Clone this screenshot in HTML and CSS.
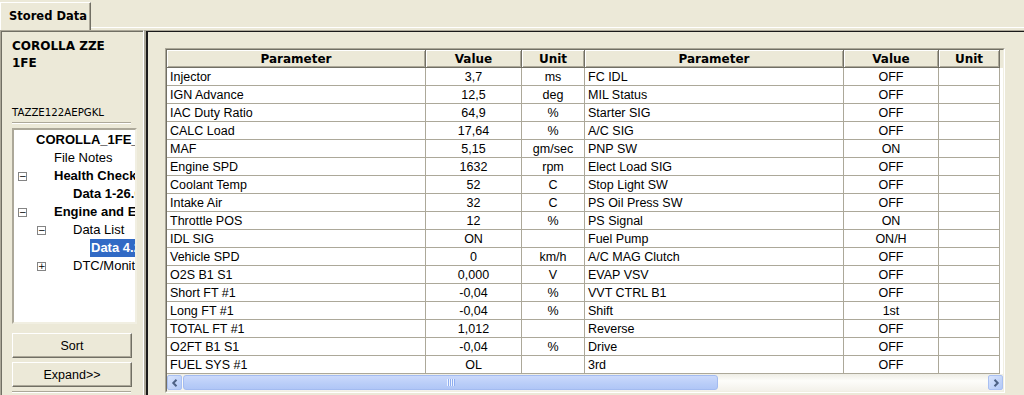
FILE: index.html
```html
<!DOCTYPE html>
<html>
<head>
<meta charset="utf-8">
<link rel="stylesheet" href="styles.css">
</head>
<body>
<div class="app">
  <div class="tabbar">
    <div class="tab">Stored Data</div>
    <div class="tabfill"></div>
  </div>
  <div class="main">
    <aside class="left">
      <div class="model">COROLLA ZZE<br>1FE</div>
      <div class="vin">TAZZE122AEPGKL</div>
      <div class="sep"></div>
      <div class="tree">
        <div class="node l0 bold"><span class="label">COROLLA_1FE_ZZE</span></div>
        <div class="node l1"><span class="slot"></span><span class="label">File Notes</span></div>
        <div class="node l1 bold"><span class="slot"><span class="exp">&#8722;</span></span><span class="label">Health Check</span></div>
        <div class="node l2 bold"><span class="slot"></span><span class="label">Data 1-26.05</span></div>
        <div class="node l1 bold"><span class="slot"><span class="exp">&#8722;</span></span><span class="label">Engine and ECT</span></div>
        <div class="node l2"><span class="slot"><span class="exp">&#8722;</span></span><span class="label">Data List</span></div>
        <div class="node l3 bold"><span class="slot"></span><span class="label sel">Data 4.26</span></div>
        <div class="node l2"><span class="slot"><span class="exp">+</span></span><span class="label">DTC/Monitor</span></div>
      </div>
      <button class="btn first">Sort</button>
      <button class="btn">Expand&gt;&gt;</button>
      <div class="sep bottom"></div>
    </aside>
    <section class="right">
      <div class="gridbox">
        <div class="gridinner">
          <div class="row hdr">
            <div>Parameter</div><div>Value</div><div>Unit</div>
            <div>Parameter</div><div>Value</div><div>Unit</div>
          </div>
          <div class="row"><div>Injector</div><div class="c">3,7</div><div class="c">ms</div><div>FC IDL</div><div class="c">OFF</div><div class="c"></div></div>
          <div class="row"><div>IGN Advance</div><div class="c">12,5</div><div class="c">deg</div><div>MIL Status</div><div class="c">OFF</div><div class="c"></div></div>
          <div class="row"><div>IAC Duty Ratio</div><div class="c">64,9</div><div class="c">%</div><div>Starter SIG</div><div class="c">OFF</div><div class="c"></div></div>
          <div class="row"><div>CALC Load</div><div class="c">17,64</div><div class="c">%</div><div>A/C SIG</div><div class="c">OFF</div><div class="c"></div></div>
          <div class="row"><div>MAF</div><div class="c">5,15</div><div class="c">gm/sec</div><div>PNP SW</div><div class="c">ON</div><div class="c"></div></div>
          <div class="row"><div>Engine SPD</div><div class="c">1632</div><div class="c">rpm</div><div>Elect Load SIG</div><div class="c">OFF</div><div class="c"></div></div>
          <div class="row"><div>Coolant Temp</div><div class="c">52</div><div class="c">C</div><div>Stop Light SW</div><div class="c">OFF</div><div class="c"></div></div>
          <div class="row"><div>Intake Air</div><div class="c">32</div><div class="c">C</div><div>PS Oil Press SW</div><div class="c">OFF</div><div class="c"></div></div>
          <div class="row"><div>Throttle POS</div><div class="c">12</div><div class="c">%</div><div>PS Signal</div><div class="c">ON</div><div class="c"></div></div>
          <div class="row"><div>IDL SIG</div><div class="c">ON</div><div class="c"></div><div>Fuel Pump</div><div class="c">ON/H</div><div class="c"></div></div>
          <div class="row"><div>Vehicle SPD</div><div class="c">0</div><div class="c">km/h</div><div>A/C MAG Clutch</div><div class="c">OFF</div><div class="c"></div></div>
          <div class="row"><div>O2S B1 S1</div><div class="c">0,000</div><div class="c">V</div><div>EVAP VSV</div><div class="c">OFF</div><div class="c"></div></div>
          <div class="row"><div>Short FT #1</div><div class="c">-0,04</div><div class="c">%</div><div>VVT CTRL B1</div><div class="c">OFF</div><div class="c"></div></div>
          <div class="row"><div>Long FT #1</div><div class="c">-0,04</div><div class="c">%</div><div>Shift</div><div class="c">1st</div><div class="c"></div></div>
          <div class="row"><div>TOTAL FT #1</div><div class="c">1,012</div><div class="c"></div><div>Reverse</div><div class="c">OFF</div><div class="c"></div></div>
          <div class="row"><div>O2FT B1 S1</div><div class="c">-0,04</div><div class="c">%</div><div>Drive</div><div class="c">OFF</div><div class="c"></div></div>
          <div class="row"><div>FUEL SYS #1</div><div class="c">OL</div><div class="c"></div><div>3rd</div><div class="c">OFF</div><div class="c"></div></div>
          <div class="hscroll">
            <div class="sbtn"><svg width="8" height="8" viewBox="0 0 8 8"><polyline points="5.5,0.8 2.3,4 5.5,7.2" fill="none" stroke="#4d6185" stroke-width="2"/></svg></div>
            <div class="thumb"><div class="grip"></div></div>
            <div class="track"></div>
            <div class="sbtn"><svg width="8" height="8" viewBox="0 0 8 8"><polyline points="2.5,0.8 5.7,4 2.5,7.2" fill="none" stroke="#4d6185" stroke-width="2"/></svg></div>
          </div>
        </div>
      </div>
    </section>
  </div>
</div>
</body>
</html>
```

FILE: styles.css
```css
body {
  margin: 0;
  background: #ece9d8;
}

.app {
  width: 1024px;
  height: 395px;
  overflow: hidden;
  display: flex;
  flex-direction: column;
  font-family: "Liberation Sans", Arial, sans-serif;
  color: #000;
}

/* Tab strip */
.tabbar {
  height: 30px;
  flex: none;
  display: flex;
}

.tab {
  width: 91px;
  height: 28px;
  margin-top: 2px;
  box-sizing: border-box;
  border-top: 1px solid #fff;
  border-left: 1px solid #fff;
  border-right: 1px solid #716f64;
  box-shadow: inset -1px 0 #aca899;
  padding: 6px 0 0 8px;
  white-space: nowrap;
  font: bold 11.5px/14px "DejaVu Sans", sans-serif;
}

.tabfill {
  flex: 1;
  height: 28px;
  box-sizing: border-box;
  border-bottom: 1px solid #fff;
}

/* Main area */
.main {
  flex: 1;
  display: flex;
  min-height: 0;
}

.left {
  width: 144px;
  flex: none;
  box-sizing: border-box;
  border-top: 1px solid #aca899;
  border-left: 1px solid #aca899;
  border-right: 1px solid #fff;
  box-shadow: inset 1px 1px #716f64;
  padding: 7px 0 0 11px;
  display: flex;
  flex-direction: column;
}

.model {
  font: bold 12px/17px "DejaVu Sans", sans-serif;
  height: 34px;
}

.vin {
  margin-top: 34px;
  font: 10.2px/14px "DejaVu Sans", sans-serif;
}

.sep {
  margin-top: 2px;
  width: 119px;
  height: 0;
  border-top: 1px solid #aca899;
  border-bottom: 1px solid #fff;
}

.sep.bottom {
  margin-top: 4px;
}

.tree {
  margin-top: 4px;
  width: 125px;
  height: 196px;
  box-sizing: border-box;
  background: #fff;
  border: 2px solid;
  border-color: #aca899 #f1efe2 #f1efe2 #aca899;
  padding-top: 1px;
  overflow: hidden;
  font: 13px/18px "Liberation Sans", Arial, sans-serif;
}

.node {
  height: 18px;
  display: flex;
  align-items: center;
  white-space: nowrap;
}

.node.bold {
  font-weight: bold;
}

.l0 { padding-left: 22px; }
.l1 { padding-left: 4px; }
.l2 { padding-left: 23px; }
.l3 { padding-left: 40px; }

.slot {
  width: 36px;
  flex: none;
  display: flex;
  align-items: center;
}

.exp {
  width: 9px;
  height: 9px;
  box-sizing: border-box;
  border: 1px solid #848484;
  background: #fff;
  font: normal 9px/7px "DejaVu Sans", sans-serif;
  text-align: center;
  color: #000;
  overflow: hidden;
}

.label {
  line-height: 18px;
}

.label.sel {
  background: #316ac5;
  color: #fff;
  padding: 0 2px 0 1px;
}

.btn {
  margin-top: 4px;
  width: 120px;
  height: 25px;
  padding: 0;
  background: #ece9d8;
  border: 1px solid;
  border-color: #fff #716f64 #716f64 #fff;
  box-shadow: inset -1px -1px #aca899;
  font: 12.5px "Liberation Sans", Arial, sans-serif;
  color: #000;
}

.btn.first {
  margin-top: 9px;
}

/* Right panel */
.right {
  flex: 1;
  box-sizing: border-box;
  border-top: 1px solid #aca899;
  border-left: 2px solid #aca899;
  box-shadow: inset 2px 1px #1a1a1a;
  padding: 17px 0 0 19px;
}

.gridbox {
  width: 840px;
  height: 345px;
  box-sizing: border-box;
  border: 1px solid;
  border-color: #aca899 #fff #fff #aca899;
}

.gridinner {
  height: 100%;
  box-sizing: border-box;
  border: 1px solid;
  border-color: #716f64 #f1efe2 #f1efe2 #716f64;
  background: #fff;
  display: flex;
  flex-direction: column;
}

.row {
  display: grid;
  grid-template-columns: 259px 96px 63px 259px 95px 61px;
  height: 18px;
  flex: none;
}

.row > div {
  box-sizing: border-box;
  height: 18px;
  border-right: 1px solid #aca899;
  border-bottom: 1px solid #aca899;
  padding-left: 3px;
  padding-top: 1px;
  font-size: 12.5px;
  line-height: 17px;
  white-space: nowrap;
  overflow: hidden;
}

.row > div.c {
  text-align: center;
  padding-left: 0;
}

.row.hdr {
  height: 18px;
  background: #ece9d8;
}

.row.hdr > div {
  height: 18px;
  padding: 1px 0 0 0;
  text-align: center;
  background: #ece9d8;
  border-right: 1px solid #716f64;
  border-bottom: 1px solid #716f64;
  box-shadow: inset 1px 1px #fff, inset -1px -1px #aca899;
  font: bold 12px/16px "DejaVu Sans", sans-serif;
}

/* Horizontal scrollbar */
.hscroll {
  height: 17px;
  flex: none;
  box-sizing: border-box;
  padding: 1px 0 1px 0;
  display: flex;
  background: linear-gradient(#eeede5, #fdfdfa 40%, #f3f1ea);
}

.sbtn {
  width: 15px;
  height: 15px;
  flex: none;
  box-sizing: border-box;
  border: 1px solid #a9c0f2;
  border-radius: 2px;
  background: linear-gradient(135deg, #d8e4fd, #b2c8f6);
  display: flex;
  align-items: center;
  justify-content: center;
}

.thumb {
  width: 535px;
  flex: none;
  margin-left: 1px;
  box-sizing: border-box;
  border: 1px solid #a3bbf0;
  border-radius: 3px;
  background: linear-gradient(#cbd9fc, #b9cdf8 60%, #b0c6f6);
  display: flex;
  align-items: center;
  justify-content: center;
}

.grip {
  width: 8px;
  height: 7px;
  background: repeating-linear-gradient(90deg, #eef3fe 0 1px, #8faef0 1px 2px);
}

.track {
  flex: 1;
}
```
